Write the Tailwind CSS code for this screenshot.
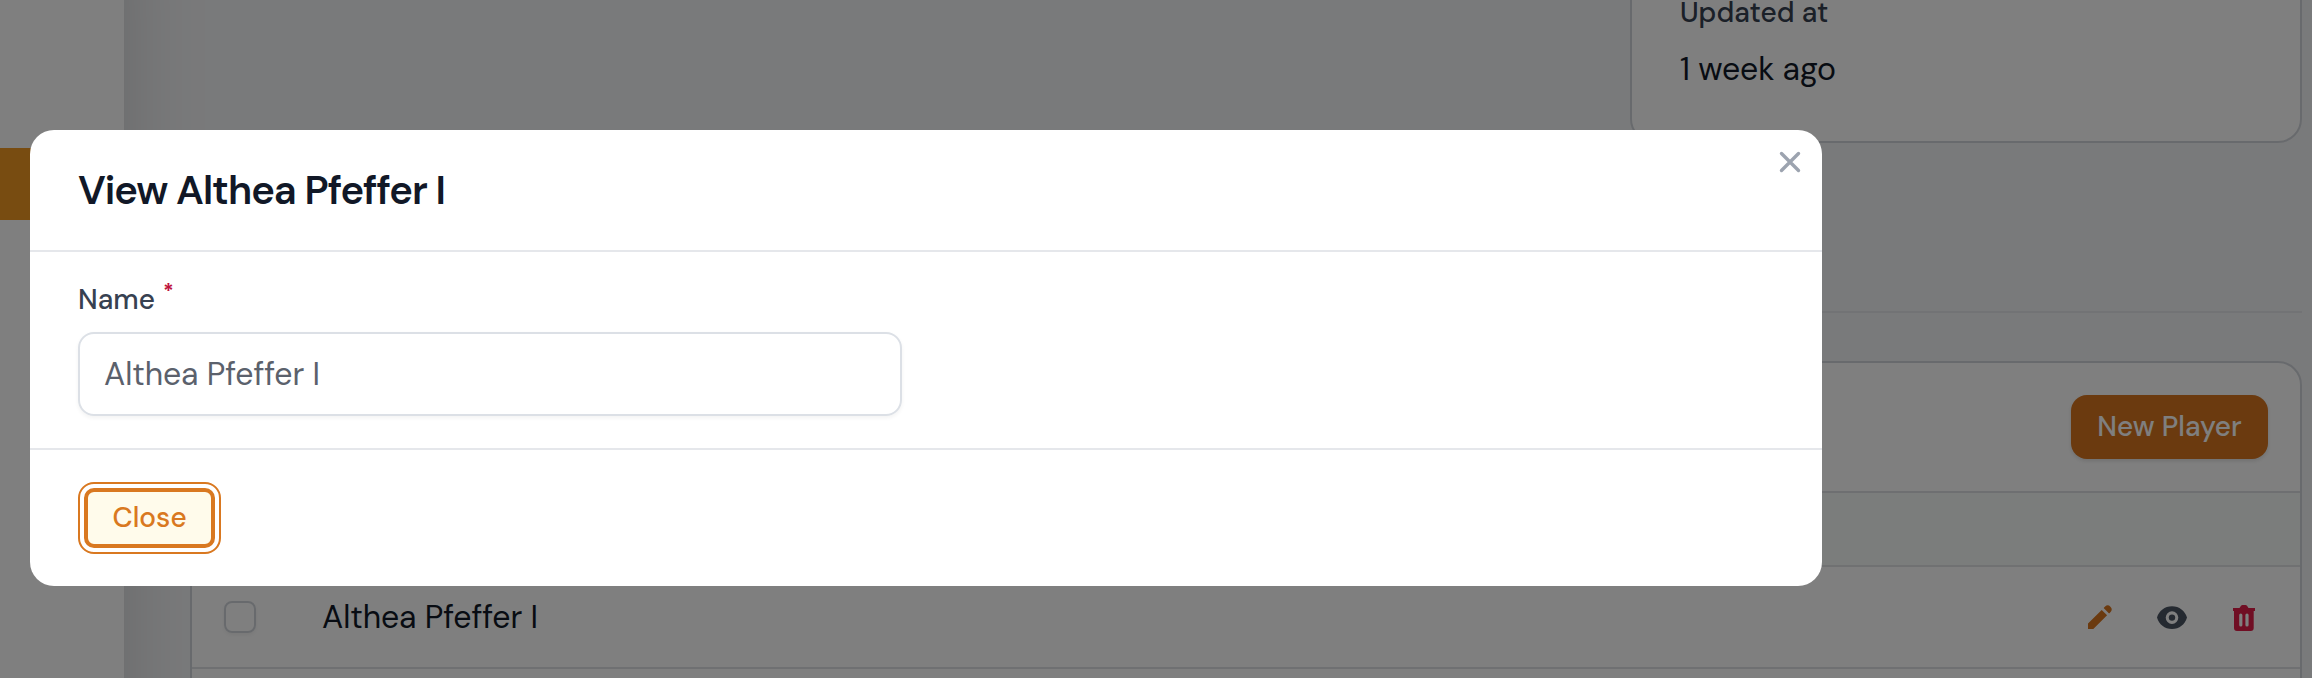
<!DOCTYPE html>
<html lang="en">
<head>
<meta charset="utf-8">
<title>View Althea Pfeffer I</title>
<script src="https://cdn.jsdelivr.net/npm/@tailwindcss/browser@4"></script>
</head>
<body class="font-['DM_Sans',Inter,sans-serif]">
<div class="relative flex h-[678px] w-[2312px] overflow-hidden bg-[#f3f4f6] text-[#111827]">

  <!-- Sidebar -->
  <aside class="-mt-40 h-[1200px] w-[124px] shrink-0 bg-white pt-[308px] shadow-[0_50px_100px_-24px_rgba(0,0,0,0.25)]">
    <div class="h-[72px] bg-[#f09822]"></div>
  </aside>

  <!-- Page content -->
  <main class="relative flex w-[2112px] shrink-0 flex-col pl-[66px] box-content">
    <section class="-mt-10 ml-[1440px] h-[183px] w-[672px] shrink-0 rounded-b-3xl border-2 border-[#d1d5db] bg-white px-[48px]">
      <div class="mt-[31px] text-[28px] leading-10 font-medium text-[#374151]">Updated at</div>
      <div class="mt-[12px] text-[32px] leading-12 tracking-[-0.1px]">1 week ago</div>
    </section>

    <hr class="mt-[168px] h-[2px] w-full shrink-0 border-0 bg-[#e5e7eb]">

    <section class="mt-12 h-[400px] w-full shrink-0 rounded-3xl border-2 border-[#d1d5db] bg-white">
      <div class="flex h-[130px] items-center justify-end border-b-2 border-[#dcdee2] pr-8">
        <button class="h-16 w-[197px] rounded-2xl bg-[#d6741e] text-[28px] font-medium text-white shadow-[0_2px_4px_rgba(0,0,0,0.12)]">New Player</button>
      </div>
      <div class="h-[74px] border-b-2 border-[#e0e3e5] bg-[#f7faf8]"></div>
      <div class="flex h-[102px] items-center border-b-2 border-[#dfe1e5] pr-10 pl-8">
        <span class="size-8 rounded-lg border-2 border-[#d1d5db] shadow-[0_2px_4px_rgba(0,0,0,0.06)]"></span>
        <span class="ml-[66px] flex-1 text-[32px] tracking-[-0.1px]">Althea Pfeffer I</span>
        <div class="-mt-px flex items-center gap-10">
          <svg class="size-8 text-[#d6741e]" viewBox="0 0 32 32" fill="currentColor"><path d="M17.700 8.900l5.400 5.400L9.300 28H4v-5.400zM19.600 7l1.500-1.500a3.900 3.900 0 0 1 5.500 5.500L25.100 12.500z"/></svg>
          <svg class="size-8 text-[#4b5563]" viewBox="0 0 32 32" fill="currentColor"><path fill-rule="evenodd" d="M1 16.500C3 10 8.600 5.300 16 5.300S29 10 31 16.500C29 23.300 23.400 28 16 28S3 23.300 1 16.500zM22.300 16.600a6.300 6.300 0 1 0-12.600 0a6.300 6.300 0 0 0 12.600 0z"/><circle cx="16" cy="16.600" r="3.200"/></svg>
          <svg class="size-8 text-[#e11d48]" viewBox="0 0 32 32" fill="currentColor"><path fill-rule="evenodd" d="M5 7h6.500l1.500-2.200q.6-.8 1.500-.8h3q.9 0 1.500.8L20.500 7H27v3h-1.300v17q0 3-3 3H9q-3 0-3-3V10H5zM11.200 14v10a1.600 1.600 0 0 0 3.200 0V14a1.600 1.600 0 0 0-3.200 0zM17.400 14v10a1.600 1.600 0 0 0 3.200 0V14a1.600 1.600 0 0 0-3.200 0z"/></svg>
        </div>
      </div>
    </section>
  </main>

  <!-- Modal over the dimmed page -->
  <div class="absolute inset-0 bg-black/50"></div>
  <div class="absolute top-[130px] left-[30px] flex h-[456px] w-[1792px] flex-col rounded-3xl bg-white">
    <header class="flex h-[122px] shrink-0 items-center justify-between border-b-2 border-[#e5e7eb] pl-12">
      <h2 class="text-[40px] leading-none font-semibold tracking-tight">View Althea Pfeffer I</h2>
      <button class="mr-4 mb-[56px] text-[#9ca3af]" aria-label="Close">
        <svg class="size-8" viewBox="0 0 32 32" fill="none" stroke="currentColor" stroke-width="3.400" stroke-linecap="round"><path d="M7.500 7.500l17 17M24.500 7.500l-17 17"/></svg>
      </button>
    </header>
    <div class="h-[198px] shrink-0 border-b-2 border-[#e5e7eb] px-12 pt-[28px]">
      <label class="flex h-10 items-center text-[28px] font-medium text-[#374151]">Name<sup class="top-[-9px] ml-[8px] text-[21px] leading-none font-bold text-[#be123c]">*</sup></label>
      <div class="mt-[12px] flex h-[84px] w-[824px] items-center rounded-2xl border-2 border-[#dce0e6] px-6 text-[32px] tracking-[-0.1px] text-[#5b616c] shadow-[0_2px_4px_rgba(0,0,0,0.05)]">Althea Pfeffer I</div>
    </div>
    <footer class="flex flex-1 items-center px-12">
      <div class="flex h-[72px] w-[143px] items-center justify-center rounded-2xl border-2 border-[#d97820]">
        <button class="h-[60px] w-[131px] rounded-[10px] border-4 border-[#d97820] bg-[#fffbeb] text-[28px] font-medium text-[#d97820]">Close</button>
      </div>
    </footer>
  </div>
</div>
</body>
</html>
